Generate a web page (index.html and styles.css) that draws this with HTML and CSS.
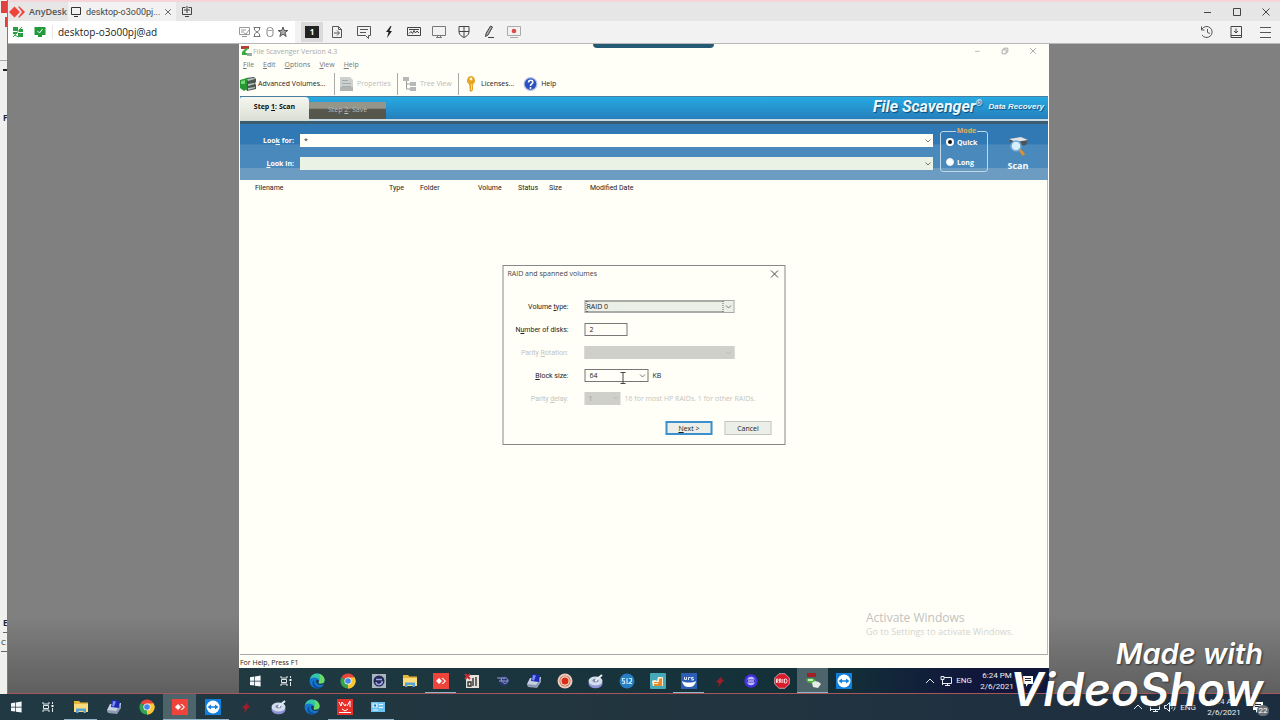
FILE: index.html
```html
<!DOCTYPE html>
<html lang="en">
<head>
    <meta charset="UTF-8">
    <meta name="viewport" content="width=device-width, initial-scale=1.0">
    <title>AnyDesk - File Scavenger</title>
    <link rel="stylesheet" href="styles.css">
</head>
<body>
    <!-- shared icons -->
    <svg class="sprite" aria-hidden="true">
        <symbol id="i-start" viewBox="0 0 16 16"><path fill="#f4f8fa" d="M3 4.2l4.3-.7v4.2H3zM8 3.4l5.6-.9v5.2H8zM3 8.4h4.3v4.2L3 12zM8 8.4h5.6v5.2L8 12.7z"/></symbol>
        <symbol id="i-view" viewBox="0 0 16 16"><path fill="none" stroke="#dfe7ea" d="M3 3v2h6V3M3 13v-2h6v2M3.500 6.500h5v3h-5zM12.500 3v2M12.500 9v4"/><path fill="#fff" d="M11.500 6h2v2h-2z"/></symbol>
        <symbol id="i-edge" viewBox="0 0 16 16"><circle cx="8" cy="8" r="7.500" fill="#1477cf"/><path fill="#35c6a6" d="M.8 6.500C2 2 5 .5 8 .5c5 0 7.500 3.500 7.500 6.500 0 2.500-2 3.700-4 3.700-1.500 0-2.200-.7-2-1.300.5-.8.6-1.200.4-2C9.500 5.500 7.500 4.600 5.500 4.600 3 4.600 1.500 5.500.8 6.500z"/><path fill="#6bdc62" d="M10 1c4 1 5.500 3.500 5.500 6 0 2.500-2 3.700-4 3.700-1.500 0-2.200-.7-2-1.300 2-2.400 2.500-5.400.5-8.400z"/><path fill="#0d4f9e" d="M5.300 7.500c-1 3 1.500 6.500 5.200 6.500 1.500 0 2.800-.5 3.700-1.300C12.500 15 10.500 15.600 8 15.500 4.500 15 3.300 12 3.400 10c.1-1.400.8-2.200 1.900-2.500z"/><path fill="#203943" d="M7 8c0 2.500 2.500 4.400 5 4 1.200-.1 2.200-.6 2.800-1.200L16 13v-3l-3 .6c-2.300.4-4-.2-3.500-1.200.4-.7.300-1.600 0-2.200C8.500 6.500 7 7 7 8z"/></symbol>
        <symbol id="i-chrome" viewBox="0 0 16 16"><path fill="#e8453c" d="M8 8L1.500 4.250A7.500 7.500 0 0 1 14.500 4.250z"/><path fill="#f9c732" d="M8 8l6.500-3.750A7.500 7.500 0 0 1 8 15.500z"/><path fill="#34a350" d="M8 8v7.500A7.500 7.500 0 0 1 1.500 4.250z"/><path fill="#f9c732" d="M8 4.500h6.600A7.500 7.500 0 0 1 8 15.500l3.200-5.500z"/><circle cx="8" cy="8" r="3.600" fill="#f5f5f5"/><circle cx="8" cy="8" r="2.800" fill="#4587f0"/></symbol>
        <symbol id="i-folder" viewBox="0 0 16 16"><path fill="#e7b43c" d="M1 2h5l1.500 1.500H15V13H1z"/><path fill="#fbdc7c" d="M1 5h14v8H1z"/><path fill="#57a3d8" d="M3 9.500h10V14h-2.500v-2h-5v2H3z"/></symbol>
        <symbol id="i-anydesk" viewBox="0 0 16 16"><path fill="#ef443b" d="M0 0h16v16H0z"/><path fill="#fff" d="M6 5l3 3-3 3-3-3z"/><path fill="#fff" d="M8.500 5H10l3 3-3 3H8.500l3-3z"/></symbol>
        <symbol id="i-disk" viewBox="0 0 16 16"><path fill="#c6d1e2" d="M1 11l3-6 11-1v4l-4 6-9-1z"/><path fill="#8d9ab2" d="M1 11l9 1 5-7v4l-4 6-9-1z"/><path fill="#1c2bb5" d="M6 1l8 1-1 7-8-1z"/><path fill="#7d90ee" d="M7 2l3 .4-2 5-2-.2z"/></symbol>
        <symbol id="i-team" viewBox="0 0 16 16"><path fill="#1180dc" d="M0 0h16v16H0z"/><circle cx="8" cy="8" r="6.500" fill="#fff"/><path fill="#1180dc" d="M2.500 8L6 5.500v1.700h4V5.500L13.500 8 10 10.500V8.800H6v1.700z"/></symbol>
        <symbol id="i-bolt" viewBox="0 0 16 16"><path fill="#a11d2b" d="M10 3L4 9l3 1-1 4 6-7-3-1z"/></symbol>
        <symbol id="i-drive" viewBox="0 0 16 16"><ellipse cx="7.500" cy="10.500" rx="7" ry="4.800" fill="#8b93d5"/><ellipse cx="7.500" cy="8" rx="7" ry="4.500" fill="#d3dcee"/><ellipse cx="7.500" cy="7.500" rx="3" ry="1.800" fill="#7c8bab"/><path stroke="#e7edf3" stroke-width="2" d="M8 7l6-5"/><circle cx="8" cy="7.500" r="1" fill="#fff"/></symbol>
        <symbol id="i-red" viewBox="0 0 16 16"><path fill="#e6302c" d="M0 0h16v16H0z"/><path fill="none" stroke="#fff" d="M2 3l2 4 1-4 3 4 1-2M10 7l3-5v6M2 13.500h12M5 10l3 2 3-2"/></symbol>
        <symbol id="i-panel" viewBox="0 0 16 16"><path fill="#6ec3f0" d="M1 3h14v10H1z"/><path fill="#e3f5fd" d="M2.500 4.500h5v4h-5zM9 5h4v1H9zM9 8h4v1H9zM3 10.500h5v1H3z"/><circle cx="5" cy="6.500" r="1.300" fill="#2981bb"/></symbol>
        <symbol id="i-square" viewBox="0 0 16 16"><path fill="#aab3c0" d="M1 1h14v14H1z"/><circle cx="8" cy="8" r="5.500" fill="#232b54"/><path fill="none" stroke="#9da9ec" stroke-width="1.500" d="M5 9a3 3 0 0 0 6-1M5 6.500h6"/></symbol>
        <symbol id="i-tools" viewBox="0 0 16 16"><path fill="#e5e1dd" d="M2 2h13v13H2z"/><path fill="none" stroke="#333" stroke-width="1.400" d="M9 5v8M12 4v9M4 9v4h3V9z"/><path fill="none" stroke="#c52f30" stroke-width="2" d="M1 1l5 5M6 1L1 6"/></symbol>
        <symbol id="i-gear" viewBox="0 0 16 16"><circle cx="9" cy="8" r="5" fill="#29366e"/><path fill="none" stroke="#91a0d4" d="M2 5h8M4 8h9M6 5c1 6 5 7 7 3M8 6c2-2 5-1 5 2"/></symbol>
        <symbol id="i-record" viewBox="0 0 16 16"><circle cx="8" cy="8" r="7.500" fill="#eecabb"/><circle cx="8" cy="8" r="5.500" fill="#b96b50"/><circle cx="8" cy="8" r="4.700" fill="#f5dfd5"/><circle cx="8" cy="8" r="3.500" fill="#d82d12"/></symbol>
        <symbol id="i-blue" viewBox="0 0 16 16"><circle cx="8" cy="8" r="7.500" fill="#267fc4"/><path fill="none" stroke="#bfe5fb" stroke-width="1.200" d="M6 5.500H3.500V8h2v2.500H3M8 5v6M10 5.500h2.500V8L10 10.500h3"/></symbol>
        <symbol id="i-teal" viewBox="0 0 16 16"><rect width="16" height="16" rx="1" fill="#46a9b7"/><path fill="#f7ecd5" d="M2 9c0-2 3-3 5-1l1-4h5v9H3z"/><path fill="#e98b24" d="M4 9h5V6l3-1v8H4z"/><path fill="#fff3cc" d="M3 10h5v1H3z"/></symbol>
        <symbol id="i-ufs" viewBox="0 0 16 16"><path fill="#2c5eb6" d="M0 0h16v16H0z"/><path fill="#fff" d="M1 8c3 2 11 2 14 0-1 5-4 6-7 6s-6-1-7-6z"/><path fill="none" stroke="#dce8fa" d="M3.500 4v2.500h2V4M7.500 7V4.500h2M12.500 4.500h-2V6h2v1h-2"/></symbol>
        <symbol id="i-ring" viewBox="0 0 16 16"><circle cx="8" cy="8" r="5.500" fill="#b9bffa" stroke="#4430dc" stroke-width="2.500"/><path stroke="#3d2fc0" stroke-width="3" d="M4 8h8"/><path stroke="#fff" d="M5 8h6"/></symbol>
        <symbol id="i-raid" viewBox="0 0 16 16"><path fill="#d91c2b" stroke="#f2c9cc" stroke-width=".7" d="M5 .7h6L15.300 5v6L11 15.300H5L.7 11V5z"/><path fill="none" stroke="#fff" stroke-width=".8" d="M2.500 10V6H4v2H2.500l2 2M5.500 10V6H7v4M5.500 8H7M8.800 6v4M10.500 6v4h1.500l1-1V7l-1-1z"/></symbol>
        <symbol id="i-scav" viewBox="0 0 16 16"><path fill="#9f2226" d="M2 0h9v4H2z"/><path fill="#49b338" d="M1 6c4-2 9-1 10 2l-3 3-6-2z"/><path fill="#e6ece6" d="M7 10c2-3 7-2 9 1l-3 4-5-1z"/><path fill="#cde9c5" d="M3 6h5v2H3z"/></symbol>
        <symbol id="i-up" viewBox="0 0 12 12"><path fill="none" stroke="#e8edf0" d="M2 8l4-4 4 4"/></symbol>
        <symbol id="i-net" viewBox="0 0 12 12"><path fill="none" stroke="#e8edf0" d="M4 2.500h7.500v6H3M5 10.500h5M7.500 8.500v2M1 1.500h3v3H1zM2.500 5v5"/></symbol>
        <symbol id="i-note" viewBox="0 0 12 12"><path fill="#fff" d="M1 1h10v8H6l-2 3V9H1z"/><path stroke="#223" d="M3 3.500h6M3 5.500h6"/></symbol>
        <symbol id="i-down" viewBox="0 0 8 8"><path fill="none" stroke="currentColor" d="M1.500 2.500L4 5l2.500-2.500"/></symbol>
        <symbol id="i-close" viewBox="0 0 10 10"><path fill="none" stroke="currentColor" d="M1.500 1.500l7 7M8.500 1.500l-7 7"/></symbol>
        <symbol id="i-max" viewBox="0 0 12 12"><path fill="none" stroke="currentColor" d="M2.500 2.500h7v7h-7z"/></symbol>
        <symbol id="i-min" viewBox="0 0 12 12"><path stroke="currentColor" d="M3 6.500h7"/></symbol>
    </svg>

    <div class="desktop">
        <div class="behind" aria-hidden="true">
            <span class="behind-red"></span>
            <span class="behind-red small"></span>
            <span class="behind-line"></span>
            <span class="behind-mark"></span>
            <span class="behind-text">F</span>
            <span class="behind-gap"></span>
            <span class="behind-text line">E</span>
            <span class="behind-text light line">C</span>
        </div>

        <div class="anydesk">
            <header class="titlebar">
                <svg class="logo" viewBox="0 0 16 12"><path fill="#ef443b" d="M5.500.5L11 6l-5.500 5.500L0 6zM9 .5h1.500L16 6l-5.500 5.500H9L13 6z"/></svg>
                <span class="brand">AnyDesk</span>
                <div class="tab">
                    <svg class="ic" viewBox="0 0 12 12"><path fill="none" stroke="#333" d="M1.500 1.500h9v7h-9zM4 10.500h4"/></svg>
                    <span>desktop-o3o00pj...</span>
                    <button class="plain" aria-label="Close tab"><svg class="ic8"><use href="#i-close"/></svg></button>
                </div>
                <button class="plain" aria-label="New tab"><svg class="ic" viewBox="0 0 12 12"><path fill="none" stroke="#444" d="M4.500 1.500h-3v7h9v-7h-3M4 10.500h4M6 0v7M3 4h6"/></svg></button>
                <div class="win-buttons">
                    <button class="plain" aria-label="Minimize"><svg class="ic"><use href="#i-min"/></svg></button>
                    <button class="plain" aria-label="Maximize"><svg class="ic"><use href="#i-max"/></svg></button>
                    <button class="plain" aria-label="Close"><svg class="ic10"><use href="#i-close"/></svg></button>
                </div>
            </header>

            <div class="toolbar">
                <div class="address">
                    <svg class="ic" viewBox="0 0 12 12"><path fill="#2b9d43" d="M1 1h5v4H1zM7 3h4v3H7zM1 6h4v2H1zM6 7h5v4H6z"/><path stroke="#2b9d43" d="M1 11l9-10M2 9l5 2"/></svg>
                    <svg class="ic" viewBox="0 0 12 12"><path fill="#219b3b" d="M.5 1h11v8H8v2H4V9H.5z"/><path fill="none" stroke="#fff" d="M3.500 5l2 2 3-4"/></svg>
                    <input class="address-input" type="text" value="desktop-o3o00pj@ad" aria-label="Remote address">
                    <svg class="ic" viewBox="0 0 12 12"><path fill="none" stroke="#999" d="M1.500 1.500h10v7h-10zM3 4h5M3 6h3M4 10.500h5M6 7l2 1 3-4"/></svg>
                    <svg class="ic" viewBox="0 0 12 12"><path fill="none" stroke="#777" d="M2.500 1.500h7M2.500 10.500h7M3.500 2v2l5 4v2M8.500 2v2l-5 4v2"/></svg>
                    <svg class="ic" viewBox="0 0 12 12"><rect x="3" y="1.500" width="6" height="9" rx="2.500" fill="none" stroke="#888"/><path stroke="#aaa" d="M3 4.500h6"/></svg>
                    <svg class="ic" viewBox="0 0 12 12"><path fill="#aaa" stroke="#555" d="M6 1l1.300 3.500h3.500L8 6.600 9.200 10.500 6 8.200l-3.200 2.300L4 6.600 1.200 4.500h3.500z"/></svg>
                </div>
                <div class="tools">
                    <button class="plain active" aria-label="Monitor 1"><span class="monitor">1</span></button>
                    <button class="plain" aria-label="File transfer"><svg class="ic14" viewBox="0 0 14 14"><path fill="none" stroke="#555" d="M2.500 1.500h6l3 3v8h-9zM8.500 1.500v3h3M4 8h5M7 5.500L9.500 8 7 10.500"/></svg></button>
                    <button class="plain wide-gap" aria-label="Chat"><svg class="ic14" viewBox="0 0 14 14"><path fill="none" stroke="#555" d="M.5 1.500h13v9h-2v3l-3-3h-8zM3 4.500h8M3 7.500h6"/></svg></button>
                    <button class="plain" aria-label="Actions"><svg class="ic14" viewBox="0 0 14 14"><path fill="#222" d="M8.500 1L4 7h2.500L5 13l5-7H7.500l2-5z"/></svg></button>
                    <button class="plain" aria-label="Keyboard"><svg class="ic14" viewBox="0 0 14 14"><path fill="none" stroke="#444" d="M.5 2.500h13v8H.5zM2 8.500l2-2 1.500 2 1.500-3 1.500 2.500 1.500-2 2 2M2 4.500h10"/></svg></button>
                    <button class="plain" aria-label="Display"><svg class="ic14" viewBox="0 0 14 14"><path fill="none" stroke="#777" d="M.5 1.500h13v9H.5zM4 12.500h6M5.500 10.500v2M8.500 10.500v2"/></svg></button>
                    <button class="plain" aria-label="Permissions"><svg class="ic14" viewBox="0 0 14 14"><path fill="none" stroke="#444" d="M2 1.500h10V7c0 3-3 4.500-5 5.500C5 11.500 2 10 2 7zM7 1.500v11M2 6.500h10"/></svg></button>
                    <button class="plain" aria-label="Whiteboard"><svg class="ic14" viewBox="0 0 14 14"><path fill="#aaa" stroke="#444" d="M8.500 1l2 1-4.500 8-2.500 1.500.5-3z"/><path stroke="#444" d="M6 12.500h6"/></svg></button>
                    <button class="plain" aria-label="Record"><svg class="ic14" viewBox="0 0 14 14"><path fill="none" stroke="#aaa" d="M.5 1.500h13v9H.5zM3 12.500h8"/><circle cx="7" cy="6" r="2.300" fill="#df4a4c"/></svg></button>
                </div>
                <div class="side-tools">
                    <button class="plain" aria-label="History"><svg class="ic14" viewBox="0 0 14 14"><path fill="none" stroke="#555" d="M2 4a5.500 5.500 0 1 1 0 6M1.500 1.500V5h3M7.500 4v3.500l2.500 1"/></svg></button>
                    <button class="plain" aria-label="Address book"><svg class="ic14" viewBox="0 0 14 14"><path fill="none" stroke="#444" d="M2 1.500h10.500v11H2zM2 10.500h10M7 3.500v4M5 6l2 2 2-2"/></svg></button>
                    <button class="plain" aria-label="Menu"><svg class="ic14" viewBox="0 0 14 14"><path stroke="#555" d="M2 2.500h11M2 7.500h11M2 12.500h11"/></svg></button>
                </div>
            </div>

            <main class="remote">
                <span class="remote-handle"></span>
                <div class="screen">
                    <div class="app">
                        <div class="app-title">
                            <svg class="ic" viewBox="0 0 12 12"><path fill="#b93e35" d="M1 1h8v3H1z"/><path fill="#3ba644" d="M6 3h3L5 7l4 3H2V7z"/><path fill="#9aa" d="M7 8h5v3H7z"/></svg>
                            <span>File Scavenger Version 4.3</span>
                            <div class="app-win">
                                <button class="plain" aria-label="Minimize"><svg class="ic8"><use href="#i-min"/></svg></button>
                                <button class="plain" aria-label="Restore"><svg class="ic8" viewBox="0 0 10 10"><path fill="none" stroke="currentColor" d="M1.500 3.500h5v5h-5zM3.500 3V1.500h5v5H7"/></svg></button>
                                <button class="plain" aria-label="Close"><svg class="ic8"><use href="#i-close"/></svg></button>
                            </div>
                        </div>
                        <nav class="menu">
                            <a href="#"><u>F</u>ile</a>
                            <a href="#"><u>E</u>dit</a>
                            <a href="#"><u>O</u>ptions</a>
                            <a href="#"><u>V</u>iew</a>
                            <a href="#"><u>H</u>elp</a>
                        </nav>
                        <div class="app-tools">
                            <button class="tool volumes"><svg class="ic16" viewBox="0 0 16 16"><path fill="#4b5650" d="M6 2l8-1 2 2v3l-1 1 1 2v4l-9 2-2-3z"/><path fill="#bac5bd" d="M7 3l7-1 1 1-7 2zM8 8l6-1 1 1-7 2zM8 12l7-1v1l-7 2z"/><path fill="#239a34" d="M0 4l7-2v11l-3 2-4-3z"/><path fill="#7bd36e" d="M1 5l4-1v4H1z"/></svg>Advanced Volumes...</button>
                            <button class="tool props" disabled><svg class="ic16" viewBox="0 0 16 16"><path fill="#ccd1cf" d="M1 1h10l3 3v11H1z"/><path stroke="#a4aba8" d="M3 4.500h6M3 7.500h9M3 10.500h9"/><path fill="#b0b6b4" d="M1 11h13v4H1z"/></svg>Properties</button>
                            <button class="tool tree" disabled><svg class="ic16" viewBox="0 0 16 16"><path fill="#b5bab8" d="M1 1h6v4H1zM8 6h6v4H8zM8 11h6v4H8z"/><path fill="none" stroke="#999" d="M4.500 5v8H8M4.500 8H8"/></svg>Tree View</button>
                            <button class="tool licenses"><svg class="ic16" viewBox="0 0 16 16"><path fill="#e8a524" d="M8 0a4.500 4.500 0 0 1 2 8.200V14l-2 2-2-2 1-1-1-1.500 1-1-1-1V8.200A4.500 4.500 0 0 1 8 0z"/><circle cx="8" cy="3" r="1.400" fill="#fff6d5"/><path stroke="#fbdc79" d="M8.500 8v6"/></svg>Licenses...</button>
                            <button class="tool"><svg class="ic16" viewBox="0 0 16 16"><circle cx="7.500" cy="8" r="7" fill="#b7c2e2"/><circle cx="7.500" cy="8" r="5.800" fill="#2951c2"/><path fill="none" stroke="#fff" stroke-width="1.600" d="M5.500 6.500c0-3 4.500-3 4.300-.3C9.700 8 7.500 7.700 7.500 10"/><circle cx="7.500" cy="12" r="1" fill="#fff"/></svg>Help</button>
                        </div>
                        <div class="banner">
                            <button class="step on">Step <u>1</u>: Scan</button>
                            <button class="step">Step <u>2</u>: Save</button>
                            <div class="product">File Scavenger<sup>®</sup></div>
                            <div class="product-sub">Data Recovery</div>
                        </div>
                        <form class="search">
                            <div class="search-fields">
                                <label for="lookfor">Loo<u>k</u> for:</label>
                                <span class="combo"><select id="lookfor"><option>*</option></select><svg class="ic8"><use href="#i-down"/></svg></span>
                                <label for="lookin"><u>L</u>ook in:</label>
                                <span class="combo pale"><select id="lookin"><option></option></select><svg class="ic8"><use href="#i-down"/></svg></span>
                            </div>
                            <fieldset class="mode">
                                <legend>Mode</legend>
                                <label><input type="radio" name="mode" checked>Quick</label>
                                <label><input type="radio" name="mode">Long</label>
                            </fieldset>
                            <button type="button" class="scan">
                                <svg viewBox="0 0 22 22"><path fill="#4d5357" d="M2 3l12-2 7 3-2 5-14 2z"/><path fill="#dfe6ea" d="M2 3l12-2 7 3-12 2z"/><path stroke="#d39138" stroke-width="3" d="M12 13l5 6"/><circle cx="9" cy="10" r="5" fill="#d5effc" stroke="#6fa9d3" stroke-width="1.500"/></svg>
                                Scan
                            </button>
                        </form>
                        <div class="files">
                            <table>
                                <colgroup><col class="c-name"><col class="c-type"><col class="c-folder"><col class="c-volume"><col class="c-status"><col class="c-size"><col></colgroup>
                                <thead>
                                    <tr><th>Filename</th><th>Type</th><th>Folder</th><th>Volume</th><th>Status</th><th>Size</th><th>Modified Date</th></tr>
                                </thead>
                            </table>
                            <div class="activate">
                                <p class="activate-head">Activate Windows</p>
                                <p>Go to Settings to activate Windows.</p>
                            </div>
                        </div>
                        <div class="status">For Help, Press F1</div>

                        <div class="dialog" role="dialog" aria-labelledby="dlgTitle">
                            <div class="dialog-title">
                                <span id="dlgTitle">RAID and spanned volumes</span>
                                <button class="plain" aria-label="Close"><svg class="ic10"><use href="#i-close"/></svg></button>
                            </div>
                            <form class="dialog-form">
                                <label for="voltype">Volume <u>t</u>ype:</label>
                                <span class="combo wide focus"><select id="voltype"><option>RAID 0</option></select><svg class="ic8"><use href="#i-down"/></svg></span>
                                <label for="disks">N<u>u</u>mber of disks:</label>
                                <input class="disks" type="text" id="disks" value="2">
                                <label for="rotation" class="off">Parity <u>R</u>otation:</label>
                                <span class="combo wide off"><select id="rotation" disabled><option></option></select><svg class="ic8"><use href="#i-down"/></svg></span>
                                <label for="block"><u>B</u>lock size:</label>
                                <span class="field">
                                    <span class="combo block"><select id="block"><option>64</option></select><svg class="ic8"><use href="#i-down"/></svg>
                                        <svg class="cursor" viewBox="0 0 7 12"><path fill="none" stroke="#444" d="M1 .5h5M3.500 1v10M1 11.500h5"/></svg>
                                    </span>KB
                                </span>
                                <label for="delay" class="off">Parity <u>d</u>elay:</label>
                                <span class="field off">
                                    <span class="combo delay off"><select id="delay" disabled><option>1</option></select><svg class="ic8"><use href="#i-down"/></svg></span>16 for most HP RAIDs. 1 for other RAIDs.
                                </span>
                            </form>
                            <div class="dialog-buttons">
                                <button class="btn primary"><u>N</u>ext &gt;</button>
                                <button class="btn">Cancel</button>
                            </div>
                        </div>
                    </div>

                    <div class="taskbar inner">
                        <button class="task" aria-label="Start"><svg><use href="#i-start"/></svg></button>
                        <button class="task" aria-label="Task view"><svg><use href="#i-view"/></svg></button>
                        <button class="task" aria-label="Edge"><svg><use href="#i-edge"/></svg></button>
                        <button class="task" aria-label="Chrome"><svg><use href="#i-chrome"/></svg></button>
                        <button class="task" aria-label="Recovery"><svg><use href="#i-square"/></svg></button>
                        <button class="task" aria-label="Explorer"><svg><use href="#i-folder"/></svg></button>
                        <button class="task open" aria-label="AnyDesk"><svg><use href="#i-anydesk"/></svg></button>
                        <button class="task" aria-label="Tools"><svg><use href="#i-tools"/></svg></button>
                        <button class="task" aria-label="Settings"><svg><use href="#i-gear"/></svg></button>
                        <button class="task" aria-label="Disk utility"><svg><use href="#i-disk"/></svg></button>
                        <button class="task" aria-label="Recorder"><svg><use href="#i-record"/></svg></button>
                        <button class="task" aria-label="Drive"><svg><use href="#i-drive"/></svg></button>
                        <button class="task" aria-label="Sync"><svg><use href="#i-blue"/></svg></button>
                        <button class="task" aria-label="Photo recovery"><svg><use href="#i-teal"/></svg></button>
                        <button class="task open" aria-label="UFS Explorer"><svg><use href="#i-ufs"/></svg></button>
                        <button class="task" aria-label="Flash"><svg><use href="#i-bolt"/></svg></button>
                        <button class="task" aria-label="Ring"><svg><use href="#i-ring"/></svg></button>
                        <button class="task" aria-label="RAID"><svg><use href="#i-raid"/></svg></button>
                        <button class="task open current" aria-label="File Scavenger"><svg><use href="#i-scav"/></svg></button>
                        <button class="task" aria-label="TeamViewer"><svg><use href="#i-team"/></svg></button>
                        <div class="tray">
                            <svg class="ic"><use href="#i-up"/></svg>
                            <svg class="ic"><use href="#i-net"/></svg>
                            <span>ENG</span>
                            <div class="clock"><span>6:24 PM</span><span>2/6/2021</span></div>
                            <svg class="ic"><use href="#i-note"/></svg>
                        </div>
                    </div>
                </div>
            </main>
        </div>
    </div>

    <footer class="taskbar outer">
        <button class="task" aria-label="Start"><svg><use href="#i-start"/></svg></button>
        <button class="task" aria-label="Task view"><svg><use href="#i-view"/></svg></button>
        <button class="task open" aria-label="Explorer"><svg><use href="#i-folder"/></svg></button>
        <button class="task" aria-label="Disk utility"><svg><use href="#i-disk"/></svg></button>
        <button class="task" aria-label="Chrome"><svg><use href="#i-chrome"/></svg></button>
        <button class="task open current" aria-label="AnyDesk"><svg><use href="#i-anydesk"/></svg></button>
        <button class="task open" aria-label="TeamViewer"><svg><use href="#i-team"/></svg></button>
        <button class="task" aria-label="Flash"><svg><use href="#i-bolt"/></svg></button>
        <button class="task" aria-label="Drive"><svg><use href="#i-drive"/></svg></button>
        <button class="task" aria-label="Edge"><svg><use href="#i-edge"/></svg></button>
        <button class="task open" aria-label="Monitor"><svg><use href="#i-red"/></svg></button>
        <button class="task open" aria-label="Control panel"><svg><use href="#i-panel"/></svg></button>
        <div class="tray">
            <svg class="ic"><use href="#i-up"/></svg>
            <svg class="ic"><use href="#i-net"/></svg>
            <svg class="ic" viewBox="0 0 12 12"><path fill="none" stroke="#e8edf0" d="M.5 4.500h2l3-3v9l-3-3h-2zM7.500 4c1 1 1 3 0 4M9.500 2.500c2 2 2 5 0 7"/></svg>
            <span>ENG</span>
            <div class="clock"><span>6:24 AM</span><span>2/6/2021</span></div>
            <span class="notify"><svg class="ic"><use href="#i-note"/></svg><span class="badge">22</span></span>
        </div>
    </footer>

    <div class="watermark">
        <div class="made">Made with</div>
        <div class="show">VideoShow</div>
    </div>
</body>
</html>
```
FILE: styles.css
```css
* {
    box-sizing: border-box;
}
body {
    margin: 0;
    height: 100vh;
    display: flex;
    flex-direction: column;
    overflow: hidden;
    font-family: "Open Sans", "Noto Sans", sans-serif;
    font-size: 10px;
    color: #222;
}
button, input, select {
    font: inherit;
    color: inherit;
}
svg {
    flex: none;
}
.sprite {
    position: absolute;
    width: 0;
    height: 0;
}
.ic {
    width: 12px;
    height: 12px;
}
.ic8 {
    width: 8px;
    height: 8px;
}
.ic10 {
    width: 10px;
    height: 10px;
}
.ic14 {
    width: 14px;
    height: 14px;
}
.ic16 {
    width: 16px;
    height: 16px;
}
.plain {
    display: flex;
    align-items: center;
    justify-content: center;
    padding: 0;
    border: none;
    background: none;
}

/* desktop behind the session window */
.desktop {
    flex: 1;
    min-height: 0;
    display: flex;
}
.behind {
    width: 7px;
    display: flex;
    flex-direction: column;
    overflow: hidden;
    background: #f0f0ef;
}
.behind-red {
    height: 12px;
    margin: 1px 0 0 1px;
    background: #e0423f;
}
.behind-red.small {
    height: 10px;
    margin: 4px 0 0 5px;
}
.behind-line {
    height: 34px;
    border-bottom: 1px solid #aaa;
}
.behind-mark {
    height: 10px;
    border-bottom: 2px solid #222;
    margin-left: 3px;
}
.behind-gap {
    flex: 1;
}
.behind-text {
    margin: 38px 0 0 3px;
    font-size: 8px;
    line-height: 18px;
    font-weight: 700;
}
.behind-text.line {
    margin-top: 0;
    border-bottom: 1px solid #666;
}
.behind-text.light {
    margin: 0 0 42px 1px;
    font-weight: 400;
}

/* AnyDesk */
.anydesk {
    flex: 1;
    min-width: 0;
    display: flex;
    flex-direction: column;
    border-left: 1px solid #c9595c;
    border-bottom: 1px solid #a8555c;
    background: #808080;
}
.titlebar {
    height: 21px;
    display: flex;
    align-items: center;
    background: #e6e6e6;
    border-top: 2px solid #f5d5d9;
}
.logo {
    width: 16px;
    height: 12px;
    margin: 0 4px 0 1px;
}
.brand {
    width: 39px;
    font-size: 9px;
    font-weight: 600;
    color: #555;
}
.tab {
    height: 100%;
    display: flex;
    align-items: center;
    gap: 4px;
    margin-right: 5px;
    padding: 0 4px 0 2px;
    background: #f2f2f2;
    font-family: Roboto, sans-serif;
    font-size: 9px;
    color: #444;
}
.win-buttons {
    display: flex;
    gap: 18px;
    margin-left: auto;
    padding-right: 9px;
    color: #444;
}
.toolbar {
    height: 23px;
    display: flex;
    align-items: center;
    background: #f1f2f1;
    border-bottom: 1px solid #b8b8b8;
}
.address {
    width: 287px;
    height: 100%;
    display: flex;
    align-items: center;
    gap: 1px;
    padding: 0 6px 0 4px;
    background: #fff;
}
.address > svg + svg:nth-of-type(2) {
    margin-left: 9px;
}
.address-input {
    flex: 1;
    min-width: 0;
    margin-left: 5px;
    padding: 0 0 0 5px;
    border: none;
    border-left: 1px solid #e8e8e8;
    background: none;
}
.tools {
    display: flex;
    align-items: center;
    gap: 3px;
    margin-left: 6px;
}
.tools .plain {
    width: 22px;
    height: 20px;
}
.tools .wide-gap {
    margin-left: 2px;
}
.tools .active {
    background: #dadada;
}
.monitor {
    width: 14px;
    background: #222;
    color: #fff;
    font-size: 8px;
    font-weight: 700;
    line-height: 12px;
}
.side-tools {
    display: flex;
    gap: 15px;
    margin-left: auto;
    padding-right: 8px;
}
.remote {
    position: relative;
    flex: 1;
    min-height: 0;
    display: flex;
    justify-content: center;
    background: linear-gradient(#808080 88%, #5f5f5f);
}
.remote-handle {
    position: absolute;
    top: 0;
    left: 46%;
    width: 121px;
    height: 4px;
    z-index: 2;
    background: #245a74;
    border-radius: 0 0 4px 4px;
}
.screen {
    height: 100%;
    aspect-ratio: 810 / 649;
    display: flex;
    flex-direction: column;
}

/* File Scavenger */
.app {
    position: relative;
    flex: 1;
    min-height: 0;
    display: flex;
    flex-direction: column;
    padding: 0 1px;
    background: #fffff8;
    font-size: 7px;
}
.app-title {
    height: 14px;
    display: flex;
    align-items: center;
    gap: 1px;
    color: #aaa;
}
.app-win {
    display: flex;
    gap: 20px;
    margin-left: auto;
    padding-right: 11px;
    color: #999;
}
.menu {
    height: 13px;
    display: flex;
    align-items: center;
    gap: 9px;
    padding-left: 3px;
}
.menu a {
    color: #777;
    text-decoration: none;
}
.app-tools {
    height: 25px;
    display: flex;
    align-items: center;
}
.tool {
    display: flex;
    align-items: center;
    gap: 2px;
    height: 22px;
    padding: 0 4px;
    border: none;
    border-right: 1px solid #aaa;
    background: none;
    white-space: nowrap;
}
.tool.volumes {
    width: 95px;
    padding-left: 0;
}
.tool.props {
    width: 63px;
}
.tool.tree {
    width: 61px;
}
.tool.licenses,
.tool:last-child {
    border-right-color: transparent;
}
.tool:disabled {
    color: #bbb;
}
.banner {
    height: 28px;
    display: flex;
    align-items: flex-start;
    border-top: 1px solid #4a7e9c;
    border-bottom: 3px solid #3c5c70;
    background: linear-gradient(#27aae3, #2580bd 90%, #c8dbe4 91%);
}
.step {
    width: 77px;
    height: 17px;
    align-self: flex-end;
    margin-bottom: 2px;
    padding: 0 0 2px;
    border: none;
    background: linear-gradient(#95958a 35%, #55564c 45%);
    color: #bbb;
}
.step.on {
    width: 69px;
    height: 100%;
    margin: 0;
    padding-bottom: 6px;
    background: linear-gradient(#f5f7f0, #d9ded3);
    border-radius: 2px 4px 0 0;
    color: #111;
    font-weight: 700;
}
.product,
.product-sub {
    color: #eaf8ff;
    font-style: italic;
    font-weight: 700;
    line-height: 20px;
    text-shadow: 1px 1px 1px #0f4a76;
}
.product {
    margin-left: auto;
    font-family: Roboto, sans-serif;
    font-size: 16px;
}
.product sup {
    font-size: 9px;
    line-height: 1;
}
.product-sub {
    margin: 0 4px 0 6px;
    font-family: "Liberation Sans", sans-serif;
    font-size: 8px;
}
.search {
    height: 56px;
    display: flex;
    align-items: center;
    background: linear-gradient(#3079b4 36%, #4a89bb 37%, #4a89bb 78%, #6c9cc1 79%);
    color: #fff;
    font-weight: 700;
}
.search-fields {
    flex: 1;
    display: grid;
    grid-template-columns: 54px 1fr;
    gap: 10px 6px;
    align-items: center;
    padding-bottom: 1px;
    text-align: right;
}
.combo {
    position: relative;
    display: flex;
    height: 13px;
    background: #fffff8;
    color: #222;
    font-weight: 400;
}
.combo.pale {
    background: #e9f2e4;
}
.combo select {
    width: 100%;
    padding: 0 4px;
    border: none;
    background: none;
    appearance: none;
    outline: none;
}
.combo .ic8 {
    position: absolute;
    right: 1px;
    top: 3px;
    color: #777;
}
.mode {
    align-self: flex-start;
    width: 48px;
    height: 45px;
    margin: 3px 0 0 7px;
    padding: 0 0 0 5px;
    border: 1px solid #bdd7e8;
    border-radius: 3px;
}
.mode legend {
    margin: 0 auto;
    padding: 0 1px;
    color: #e0ae58;
    line-height: 8px;
}
.mode label {
    display: flex;
    align-items: center;
    gap: 3px;
    height: 14px;
    margin-bottom: 6px;
}
.mode input {
    width: 8px;
    height: 8px;
    margin: 0;
    appearance: none;
    background: #fff;
    border: 1px solid #e9f2f8;
    border-radius: 50%;
}
.mode input:checked {
    background: #111;
    border: 2px solid #fff;
}
.scan {
    width: 60px;
    display: flex;
    flex-direction: column;
    align-items: center;
    gap: 2px;
    padding: 4px 0 0;
    border: none;
    background: none;
    font-size: 9px;
    font-weight: 700;
    line-height: 12px;
}
.scan svg {
    width: 22px;
    height: 22px;
}
.files {
    flex: 1;
    display: flex;
    flex-direction: column;
    justify-content: space-between;
    border-right: 1px solid #bbb;
    border-bottom: 1px solid #aaa;
}
.files table {
    margin-left: 15px;
    table-layout: fixed;
    border-collapse: collapse;
    font-family: Roboto, sans-serif;
}
.files th {
    padding: 3px 0;
    font-weight: 400;
    line-height: 10px;
    text-align: left;
}
.c-name { width: 134px; }
.c-type { width: 31px; }
.c-folder { width: 58px; }
.c-volume { width: 40px; }
.c-status { width: 31px; }
.c-size { width: 41px; }
.activate {
    align-self: flex-end;
    width: 181px;
    padding-bottom: 15px;
    color: #d4d4d0;
    font-size: 9px;
    line-height: 14px;
}
.activate p {
    margin: 0;
}
.activate .activate-head {
    color: #c2c2be;
    font-size: 12px;
}
.status {
    height: 13px;
    line-height: 15px;
}

/* RAID dialog */
.dialog {
    position: absolute;
    top: 221px;
    left: 50%;
    width: 283px;
    transform: translateX(-50%);
    padding-bottom: 9px;
    background: #fffff8;
    border: 1px solid #888;
}
.dialog-title {
    height: 15px;
    display: flex;
    align-items: center;
    justify-content: space-between;
    padding: 0 5px 0 4px;
    color: #444;
}
.dialog-form {
    display: grid;
    grid-template-columns: 65px 1fr;
    grid-auto-rows: 23px;
    column-gap: 16px;
    align-items: center;
    padding-top: 14px;
}
.dialog-form > label {
    font-family: Roboto, sans-serif;
    text-align: right;
}
.dialog .off {
    color: #c4c4be;
}
.field {
    display: flex;
    align-items: center;
    gap: 4px;
    white-space: nowrap;
}
.combo.wide {
    width: 150px;
    border: 1px solid #c4c6c0;
}
.combo.focus {
    background: #ecefe6;
    border-color: #aaa;
}
.combo.focus select {
    width: 138px;
    border: 1px dotted #666;
    padding: 0;
}
.dialog .combo.off {
    background: #cfd0ca;
    border-color: #cfd0ca;
    color: #999;
}
.combo select:disabled {
    opacity: 1;
}
.dialog .combo.off .ic8 {
    color: #bbb;
}
.dialog .combo .ic8 {
    top: 2px;
}
.disks,
.combo.block {
    height: 13px;
    border: 1px solid #777;
    background: #fffff8;
}
.disks {
    width: 43px;
    padding: 0 4px;
}
.combo.block {
    width: 64px;
}
.combo.delay {
    width: 36px;
}
.cursor {
    position: absolute;
    top: 2px;
    right: 21px;
    width: 7px;
    height: 12px;
}
.dialog-buttons {
    display: flex;
    justify-content: flex-end;
    gap: 12px;
    padding: 11px 13px 0 0;
}
.btn {
    width: 47px;
    height: 14px;
    padding: 0;
    background: #ecefe8;
    border: 1px solid #c3c5bf;
}
.btn.primary {
    border: 2px solid #3c8fce;
}

/* taskbars */
.taskbar {
    height: 26px;
    flex: none;
    display: flex;
    color: #edf1f3;
}
.taskbar.inner {
    height: 25px;
    background: linear-gradient(90deg, #213a42, #122f38 75%, #11173b 90%);
}
.taskbar.outer {
    background: linear-gradient(90deg, #203943, #22363f 45%, #1d2d40);
}
.task {
    width: 31px;
    display: flex;
    align-items: center;
    justify-content: center;
    padding: 0;
    border: none;
    background: none;
}
.outer .task {
    width: 33px;
}
.outer .task:first-child {
    width: 31px;
}
.task svg {
    width: 16px;
    height: 16px;
}
.task.open {
    box-shadow: inset 0 -1px #92b5c9;
}
.task.current {
    background: #4e646b;
}
.tray {
    display: flex;
    align-items: center;
    gap: 4px;
    margin-left: auto;
    padding-right: 15px;
    font-family: Roboto, sans-serif;
    font-size: 8px;
}
.outer .tray {
    padding-right: 16px;
}
.clock {
    width: 42px;
    display: flex;
    flex-direction: column;
    align-items: center;
    line-height: 11px;
}
.outer .clock {
    width: 48px;
}
.notify {
    position: relative;
    display: flex;
}
.badge {
    position: absolute;
    left: 5px;
    top: 4px;
    width: 12px;
    border-radius: 6px;
    background: #66717a;
    color: #fff;
    line-height: 11px;
    text-align: center;
}

.watermark {
    position: absolute;
    right: 17px;
    bottom: 13px;
    color: #fff;
    font-family: Inter, sans-serif;
    font-style: italic;
    font-weight: 600;
    text-align: right;
    text-shadow: 1px 1px 2px #333;
}
.made {
    font-size: 29px;
    line-height: 34px;
}
.show {
    font-size: 46px;
    line-height: 36px;
}
```
